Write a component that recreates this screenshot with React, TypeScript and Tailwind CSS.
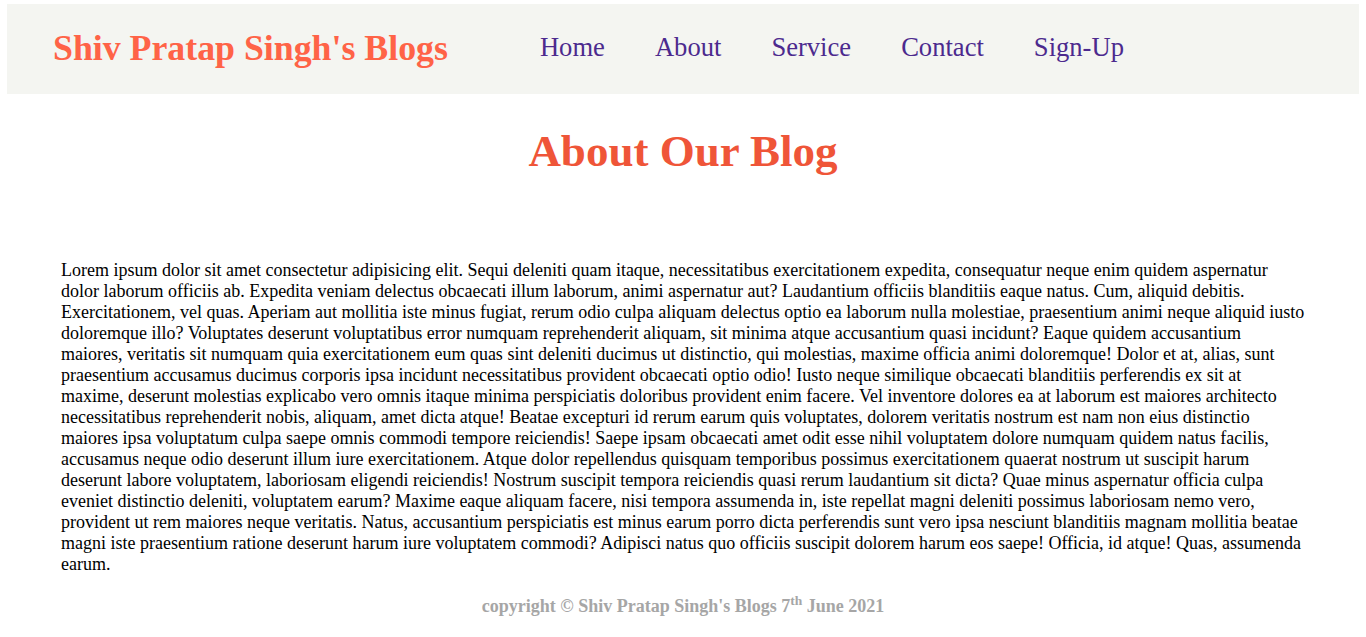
const para =
  "Lorem ipsum dolor sit amet consectetur adipisicing elit. Sequi deleniti quam itaque, necessitatibus exercitationem expedita, consequatur neque enim quidem aspernatur dolor laborum officiis ab. Expedita veniam delectus obcaecati illum laborum, animi aspernatur aut? Laudantium officiis blanditiis eaque natus. Cum, aliquid debitis. Exercitationem, vel quas. Aperiam aut mollitia iste minus fugiat, rerum odio culpa aliquam delectus optio ea laborum nulla molestiae, praesentium animi neque aliquid iusto doloremque illo? Voluptates deserunt voluptatibus error numquam reprehenderit aliquam, sit minima atque accusantium quasi incidunt? Eaque quidem accusantium maiores, veritatis sit numquam quia exercitationem eum quas sint deleniti ducimus ut distinctio, qui molestias, maxime officia animi doloremque! Dolor et at, alias, sunt praesentium accusamus ducimus corporis ipsa incidunt necessitatibus provident obcaecati optio odio! Iusto neque similique obcaecati blanditiis perferendis ex sit at maxime, deserunt molestias explicabo vero omnis itaque minima perspiciatis doloribus provident enim facere. Vel inventore dolores ea at laborum est maiores architecto necessitatibus reprehenderit nobis, aliquam, amet dicta atque! Beatae excepturi id rerum earum quis voluptates, dolorem veritatis nostrum est nam non eius distinctio maiores ipsa voluptatum culpa saepe omnis commodi tempore reiciendis! Saepe ipsam obcaecati amet odit esse nihil voluptatem dolore numquam quidem natus facilis, accusamus neque odio deserunt illum iure exercitationem. Atque dolor repellendus quisquam temporibus possimus exercitationem quaerat nostrum ut suscipit harum deserunt labore voluptatem, laboriosam eligendi reiciendis! Nostrum suscipit tempora reiciendis quasi rerum laudantium sit dicta? Quae minus aspernatur officia culpa eveniet distinctio deleniti, voluptatem earum? Maxime eaque aliquam facere, nisi tempora assumenda in, iste repellat magni deleniti possimus laboriosam nemo vero, provident ut rem maiores neque veritatis. Natus, accusantium perspiciatis est minus earum porro dicta perferendis sunt vero ipsa nesciunt blanditiis magnam mollitia beatae magni iste praesentium ratione deserunt harum iure voluptatem commodi? Adipisci natus quo officiis suscipit dolorem harum eos saepe! Officia, id atque! Quas, assumenda earum.";

const links = ["Home", "About", "Service", "Contact", "Sign-Up"];

export default function App() {
  return (
    <div className="min-h-[637px] bg-white font-['Liberation_Serif','Times_New_Roman',serif] text-black">
      {/* header */}
      <nav className="mx-[7px] pt-[4px]">
        <div className="flex h-[90px] items-center bg-[#f4f5f1] pl-[46px]">
          <h2 className="text-[35.8px] font-bold text-[#ff6347]">Shiv Pratap Singh's Blogs</h2>
          <ul className="ml-[92px] -mt-[3px] flex gap-[50px]">
            {links.map((l) => (
              <li key={l}>
                <a href="#" className="text-[26.6px] text-[#4c2a8e]">
                  {l}
                </a>
              </li>
            ))}
          </ul>
        </div>
      </nav>

      <h1 className="mt-[24px] text-center text-[45px] font-bold text-[#ef5538]">About Our Blog</h1>

      <p className="mx-[61px] mt-[74px] text-[18px] leading-[21px]">{para}</p>

      <footer className="mt-[18px] text-center text-[18px] font-bold text-[#a6a6a6]">
        copyright &copy; Shiv Pratap Singh's Blogs 7<sup>th</sup> June 2021
      </footer>
    </div>
  );
}
